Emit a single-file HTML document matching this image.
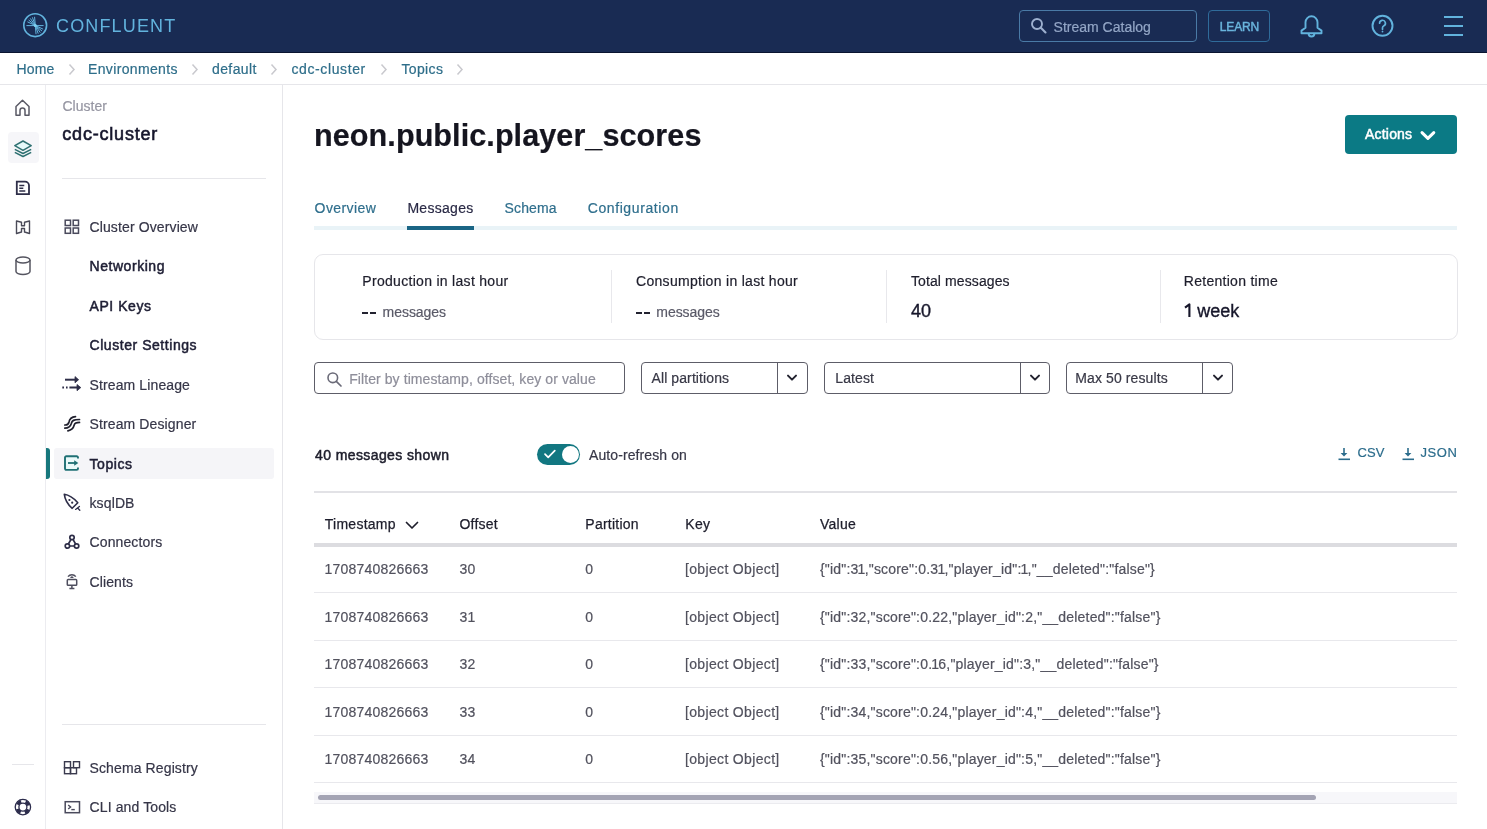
<!DOCTYPE html>
<html><head><meta charset="utf-8"><title>neon.public.player_scores | Confluent</title>
<style>
*{box-sizing:border-box;margin:0;padding:0}
html,body{width:1487px;height:829px;overflow:hidden;background:#fff;font-family:"Liberation Sans",sans-serif}
.t{position:absolute;white-space:nowrap;line-height:1;-webkit-text-stroke:0.2px currentColor}
.r{position:absolute}
</style></head><body>
<div id="page" style="position:absolute;left:0;top:0;width:1487px;height:829px;will-change:transform;background:#fff">
<div class="r" style="left:0px;top:0px;width:1487px;height:52px;background:#192b53"></div>
<div class="r" style="left:0px;top:52px;width:1487px;height:1px;background:#0a1430"></div>
<svg class="r" style="left:21px;top:12px" width="29" height="29" viewBox="0 0 29 29"><circle cx="14.2" cy="13.2" r="11.4" fill="none" stroke="#62b3dd" stroke-width="1.6"/>
<g stroke="#62b3dd" stroke-width="1" stroke-linecap="round" fill="none">
<path d="M5.8 13.6 H22.2"/>
<path d="M14.3 13.5 L13.6 5.2 M14.3 13.5 L11.5 5.7 M14.3 13.5 L9.5 6.7 M14.3 13.5 L7.9 8.2 M14.3 13.5 L6.8 10.0 M14.3 13.5 L15.0 21.8 M14.3 13.5 L17.1 21.3 M14.3 13.5 L19.1 20.3 M14.3 13.5 L20.7 18.8 M14.3 13.5 L21.8 17.0"/>
</g><circle cx="14.3" cy="13.5" r="1.6" fill="#7fd0f0"/></svg>
<div class="t" style="left:56px;top:17px;font-size:18px;color:#62b3dd;font-weight:normal;letter-spacing:1.15px;-webkit-text-stroke:0">CONFLUENT</div>
<div class="r" style="left:1019px;top:10px;width:178px;height:32px;border:1.5px solid #4a7aa6;border-radius:4px"></div>
<svg class="r" style="left:1030px;top:17px" width="18" height="18" viewBox="0 0 18 18"><circle cx="7" cy="7" r="5" fill="none" stroke="#9db0cf" stroke-width="1.9"/><path d="M10.6 10.6 L15.5 15.5" stroke="#9db0cf" stroke-width="2.1" stroke-linecap="round"/></svg>
<div class="t" style="left:1053.6px;top:19.9px;font-size:14px;color:#93a6c6;font-weight:normal;">Stream Catalog</div>
<div class="r" style="left:1208px;top:10px;width:62px;height:32px;border:1.5px solid #2f6b9a;border-radius:4px"></div>
<div class="t" style="left:1219.8px;top:20.6px;font-size:12px;color:#6ab5dd;font-weight:normal;letter-spacing:-0.15px;-webkit-text-stroke:0.45px #6ab5dd">LEARN</div>
<svg class="r" style="left:1299px;top:13px" width="25" height="27" viewBox="0 0 25 27"><path d="M6.5 14.8 V9.3 a6 6 0 0 1 12 0 V14.8 L22.5 17.6 V20.2 H2.5 V17.6 Z" fill="none" stroke="#62b3dd" stroke-width="1.9" stroke-linejoin="round"/><path d="M9.6 20.4 a2.9 3.1 0 0 0 5.8 0" fill="none" stroke="#62b3dd" stroke-width="1.9"/></svg>
<svg class="r" style="left:1370px;top:14px" width="25" height="25" viewBox="0 0 25 25"><circle cx="12.5" cy="11.8" r="10" fill="none" stroke="#62b3dd" stroke-width="1.9"/><path d="M9.6 9.2 a2.9 2.9 0 1 1 4.3 2.5 c-0.9 0.5 -1.4 1 -1.4 2 v1.6" fill="none" stroke="#62b3dd" stroke-width="1.7" stroke-linecap="round"/><circle cx="12.5" cy="17.6" r="0.9" fill="#62b3dd"/></svg>
<div class="r" style="left:1444px;top:16px;width:19px;height:1.6px;background:#62b3dd"></div>
<div class="r" style="left:1444px;top:25px;width:19px;height:1.6px;background:#62b3dd"></div>
<div class="r" style="left:1444px;top:34px;width:19px;height:1.6px;background:#62b3dd"></div>
<div class="r" style="left:0px;top:84px;width:1487px;height:1px;background:#e6e6ea"></div>
<div class="t" style="left:16.5px;top:61.599999999999994px;font-size:14px;color:#2e6e8a;font-weight:normal;letter-spacing:0.15px">Home</div>
<div class="t" style="left:88px;top:61.599999999999994px;font-size:14px;color:#2e6e8a;font-weight:normal;letter-spacing:0.35px">Environments</div>
<div class="t" style="left:212px;top:61.599999999999994px;font-size:14px;color:#2e6e8a;font-weight:normal;letter-spacing:0.4px">default</div>
<div class="t" style="left:291.5px;top:61.599999999999994px;font-size:14px;color:#2e6e8a;font-weight:normal;letter-spacing:0.6px">cdc-cluster</div>
<div class="t" style="left:401.5px;top:61.599999999999994px;font-size:14px;color:#2e6e8a;font-weight:normal;letter-spacing:0.35px">Topics</div>
<svg class="r" style="left:68px;top:63px" width="8" height="13" viewBox="0 0 8 13"><path d="M1.5 1.5 L6 6.5 L1.5 11.5" fill="none" stroke="#c9c9ce" stroke-width="1.5"/></svg>
<svg class="r" style="left:191px;top:63px" width="8" height="13" viewBox="0 0 8 13"><path d="M1.5 1.5 L6 6.5 L1.5 11.5" fill="none" stroke="#c9c9ce" stroke-width="1.5"/></svg>
<svg class="r" style="left:270px;top:63px" width="8" height="13" viewBox="0 0 8 13"><path d="M1.5 1.5 L6 6.5 L1.5 11.5" fill="none" stroke="#c9c9ce" stroke-width="1.5"/></svg>
<svg class="r" style="left:380px;top:63px" width="8" height="13" viewBox="0 0 8 13"><path d="M1.5 1.5 L6 6.5 L1.5 11.5" fill="none" stroke="#c9c9ce" stroke-width="1.5"/></svg>
<svg class="r" style="left:456px;top:63px" width="8" height="13" viewBox="0 0 8 13"><path d="M1.5 1.5 L6 6.5 L1.5 11.5" fill="none" stroke="#c9c9ce" stroke-width="1.5"/></svg>
<div class="r" style="left:45px;top:85px;width:1px;height:744px;background:#ececf0"></div>
<div class="r" style="left:282px;top:85px;width:1px;height:744px;background:#e6e6ea"></div>
<svg class="r" style="left:14px;top:99px" width="17" height="18" viewBox="0 0 17 18"><path d="M2 16.2 V7.5 L8.5 1.2 L15 7.5 V16.2 H11 V11.5 a2.5 2.5 0 0 0 -5 0 V16.2 Z" fill="none" stroke="#5a5a66" stroke-width="1.5" stroke-linejoin="round"/></svg>
<div class="r" style="left:8px;top:132px;width:31px;height:31px;background:#f6f6f9;border-radius:4px"></div>
<svg class="r" style="left:13px;top:139px" width="20" height="19" viewBox="0 0 20 19"><path d="M1.8 10.3 L10 14.5 L18.2 10.3" fill="none" stroke="#2f7172" stroke-width="1.5" stroke-linejoin="round"/><path d="M1.8 13.3 L10 17.5 L18.2 13.3" fill="none" stroke="#2f7172" stroke-width="1.5" stroke-linejoin="round"/><path d="M10 2 L18.2 6.7 L10 11.3 L1.8 6.7 Z" fill="#e6fafa" stroke="#2f7172" stroke-width="1.5" stroke-linejoin="round"/></svg>
<svg class="r" style="left:15px;top:180px" width="16" height="16" viewBox="0 0 16 16"><path d="M1.8 1.6 H10 a4 4 0 0 1 4 4 V14.2 H1.8 Z" fill="none" stroke="#2e2e48" stroke-width="1.8"/><path d="M4.3 5.5 H9.3 M4.3 8.2 H8.3 M4.3 11 H10.3" stroke="#2e2e48" stroke-width="1.5"/></svg>
<svg class="r" style="left:15px;top:219px" width="16" height="16" viewBox="0 0 16 16"><path d="M1.5 2 L6.5 3.3 V6.7 H9.5 V3.3 L14.5 2 V14.5 L9.5 13 V9.5 H6.5 V13 L1.5 14.5 Z" fill="none" stroke="#4a4a58" stroke-width="1.4" stroke-linejoin="round"/></svg>
<svg class="r" style="left:14px;top:255px" width="18" height="22" viewBox="0 0 18 22"><ellipse cx="9" cy="5" rx="7" ry="3" fill="none" stroke="#555560" stroke-width="1.5"/><path d="M2 5 V16.5 a7 3 0 0 0 14 0 V5" fill="none" stroke="#555560" stroke-width="1.5"/></svg>
<div class="r" style="left:12px;top:764px;width:22px;height:1px;background:#e6e6ea"></div>
<svg class="r" style="left:11px;top:795px" width="24" height="24" viewBox="0 0 24 24"><g fill="none" stroke="#2c2c4c"><circle cx="11.9" cy="12.1" r="7.7" stroke-width="1.3"/><circle cx="11.9" cy="12.1" r="4" stroke-width="1.3"/><circle cx="11.9" cy="12.1" r="5.85" stroke-width="3.4" stroke-dasharray="4.6 4.51" stroke-dashoffset="-2.25"/></g></svg>
<div class="t" style="left:62.5px;top:98.5px;font-size:14px;color:#9696a2;font-weight:normal;">Cluster</div>
<div class="t" style="left:62.3px;top:124.6px;font-size:18px;color:#16162c;font-weight:normal;letter-spacing:0.8px;-webkit-text-stroke:0.6px #16162c">cdc-cluster</div>
<div class="r" style="left:62px;top:178px;width:204px;height:1px;background:#e6e6ea"></div>
<div class="r" style="left:54px;top:448px;width:220px;height:31px;background:#f5f5f8;border-radius:3px"></div>
<div class="r" style="left:46px;top:448px;width:4px;height:31px;background:#17777c;border-radius:0 3px 3px 0"></div>
<div class="t" style="left:89.5px;top:220.1px;font-size:14px;color:#363648;font-weight:normal;letter-spacing:0.12px">Cluster Overview</div>
<div class="t" style="left:89.5px;top:259.2px;font-size:14px;color:#1e1e34;font-weight:normal;letter-spacing:0.55px;-webkit-text-stroke:0.5px #1e1e34">Networking</div>
<div class="t" style="left:89.5px;top:299px;font-size:14px;color:#1e1e34;font-weight:normal;letter-spacing:0.55px;-webkit-text-stroke:0.5px #1e1e34">API Keys</div>
<div class="t" style="left:89.5px;top:338.3px;font-size:14px;color:#1e1e34;font-weight:normal;letter-spacing:0.55px;-webkit-text-stroke:0.5px #1e1e34">Cluster Settings</div>
<div class="t" style="left:89.5px;top:377.7px;font-size:14px;color:#363648;font-weight:normal;letter-spacing:0.12px">Stream Lineage</div>
<div class="t" style="left:89.5px;top:417.1px;font-size:14px;color:#363648;font-weight:normal;letter-spacing:0.12px">Stream Designer</div>
<div class="t" style="left:89.5px;top:456.6px;font-size:14px;color:#1e1e34;font-weight:normal;letter-spacing:0.55px;-webkit-text-stroke:0.5px #1e1e34">Topics</div>
<div class="t" style="left:89.5px;top:496px;font-size:14px;color:#363648;font-weight:normal;letter-spacing:0.12px">ksqlDB</div>
<div class="t" style="left:89.5px;top:535.3px;font-size:14px;color:#363648;font-weight:normal;letter-spacing:0.12px">Connectors</div>
<div class="t" style="left:89.5px;top:574.9px;font-size:14px;color:#363648;font-weight:normal;letter-spacing:0.12px">Clients</div>
<div class="t" style="left:89.5px;top:760.9px;font-size:14px;color:#363648;font-weight:normal;letter-spacing:0.12px">Schema Registry</div>
<div class="t" style="left:89.5px;top:800px;font-size:14px;color:#363648;font-weight:normal;letter-spacing:0.12px">CLI and Tools</div>
<div class="r" style="left:62px;top:724px;width:204px;height:1px;background:#e6e6ea"></div>
<svg class="r" style="left:63px;top:218px" width="18" height="18" viewBox="0 0 18 18"><g fill="none" stroke="#4a4a5c" stroke-width="1.5"><rect x="2.2" y="2.2" width="5.3" height="5.3"/><rect x="10.2" y="2.2" width="5.3" height="5.3"/><rect x="2.2" y="10" width="5.3" height="5.3"/><rect x="10.2" y="10" width="5.3" height="5.3"/></g></svg>
<svg class="r" style="left:61px;top:374px" width="22" height="18" viewBox="0 0 22 18"><g stroke="#2e2e48" stroke-width="2" fill="#2e2e48"><path d="M4 5.7 H14" /><path d="M14 2.6 L17.6 5.7 L14 8.8 Z" stroke-width="0.8" stroke-linejoin="round"/><path d="M1.3 13.6 H3 M5 13.6 H6.6 M8.4 13.6 H16" /><path d="M16 10.5 L19.8 13.6 L16 16.7 Z" stroke-width="0.8" stroke-linejoin="round"/></g></svg>
<svg class="r" style="left:61px;top:412px" width="24" height="24" viewBox="0 0 24 24"><g fill="none" stroke="#20202e" stroke-width="1.7" stroke-linecap="round"><path d="M3.8 13 C6.5 13.2 7.5 12.5 8 10 C8.5 7 10 5 14.5 4.6"/><path d="M3.8 16.2 C7.5 16 9.5 14.5 10.3 11.5 C11 8.5 12.5 7.5 18.5 7.5"/><path d="M6.9 18.8 C11 18 12.5 16 13.2 13 C13.8 10.8 15 10.4 18.5 10.4"/></g></svg>
<svg class="r" style="left:63px;top:455px" width="18" height="17" viewBox="0 0 18 17"><path d="M15 3.6 V2.6 a1.3 1.3 0 0 0 -1.3 -1.3 H3.3 a1.3 1.3 0 0 0 -1.3 1.3 V13.6 a1.3 1.3 0 0 0 1.3 1.3 H13.7 a1.3 1.3 0 0 0 1.3 -1.3 V12.6" fill="#eafafa" stroke="#1f7074" stroke-width="1.9"/><path d="M5 8 H12.5" stroke="#1f7074" stroke-width="1.8"/><path d="M11.2 5.2 L15.3 8 L11.2 10.8 Z" fill="#1f7074"/></svg>
<svg class="r" style="left:60px;top:490px" width="24" height="24" viewBox="0 0 24 24"><path d="M4.3 4.3 C9.5 5 14 8.5 17.8 12.7 L12.2 18.3 C8.2 14.8 5 10 4.3 4.3 Z" fill="none" stroke="#2e2e48" stroke-width="1.6" stroke-linejoin="round"/><circle cx="9.4" cy="10" r="1.1" fill="#2e2e48"/><circle cx="12.2" cy="12.7" r="1.1" fill="#2e2e48"/><path d="M15.6 19.4 L19.4 16.4 M17.6 18 L19.8 20.3" stroke="#2e2e48" stroke-width="1.3" stroke-linecap="round"/></svg>
<svg class="r" style="left:63px;top:533px" width="18" height="18" viewBox="0 0 18 18"><g fill="none" stroke="#2e2e48" stroke-width="1.7"><circle cx="9" cy="4.5" r="2.2"/><circle cx="4.4" cy="13" r="2.2"/><circle cx="13.6" cy="13" r="2.2"/><path d="M8 6.4 L5.4 11 M10 6.4 L12.6 11 M6.6 13 H11.4"/></g></svg>
<svg class="r" style="left:60px;top:569px" width="24" height="24" viewBox="0 0 24 24"><g fill="none" stroke="#4e4e5e" stroke-width="1.5"><path d="M8 7.6 A4.9 4.9 0 0 1 15.8 7.6"/><rect x="7.3" y="10.6" width="9.4" height="5.7" rx="0.8"/><path d="M11.9 16.3 V19 M9.4 19.4 H14.4"/></g><path d="M10.2 8.9 A1.7 1.7 0 0 1 13.6 8.9 Z" fill="#4e4e5e"/></svg>
<svg class="r" style="left:60px;top:756px" width="24" height="24" viewBox="0 0 24 24"><g fill="none" stroke="#3a3a4e" stroke-width="1.4"><rect x="4.5" y="5.7" width="6" height="6"/><rect x="13.5" y="5.7" width="6" height="6"/><rect x="4.5" y="11.7" width="6" height="6"/><rect x="10.5" y="11.7" width="6" height="6"/></g></svg>
<svg class="r" style="left:63px;top:800px" width="18" height="15" viewBox="0 0 18 15"><rect x="2.2" y="1.7" width="14.3" height="11" fill="none" stroke="#4a4a5c" stroke-width="1.5"/><path d="M5.2 5 L7.6 7 L5.2 9" fill="none" stroke="#4a4a5c" stroke-width="1.4"/><path d="M8.3 9.6 H11.8" stroke="#4a4a5c" stroke-width="1.4"/></svg>
<div class="t" style="left:314px;top:119.6px;font-size:30.6px;color:#15151f;font-weight:bold;letter-spacing:0.06px">neon.public.player_scores</div>
<div class="r" style="left:1345px;top:114.5px;width:112px;height:39.5px;background:#0b7a85;border-radius:4px"></div>
<div class="t" style="left:1365px;top:127px;font-size:14px;color:#ffffff;font-weight:normal;letter-spacing:0.2px;-webkit-text-stroke:0.5px #ffffff">Actions</div>
<svg class="r" style="left:1419px;top:129px" width="18" height="14" viewBox="0 0 18 14"><path d="M3 3.6 L8.9 9.4 L14.8 3.6" fill="none" stroke="#fff" stroke-width="3" stroke-linecap="round" stroke-linejoin="round"/></svg>
<div class="r" style="left:314px;top:226px;width:1143px;height:3.5px;background:#e9f3f7"></div>
<div class="r" style="left:407px;top:226px;width:67px;height:3.5px;background:#1a6585"></div>
<div class="t" style="left:314.6px;top:201.1px;font-size:14px;color:#2f6f8d;font-weight:normal;letter-spacing:0.4px">Overview</div>
<div class="t" style="left:407.4px;top:201.1px;font-size:14px;color:#2a2a46;font-weight:normal;letter-spacing:0.3px">Messages</div>
<div class="t" style="left:504.5px;top:201.1px;font-size:14px;color:#2f6f8d;font-weight:normal;letter-spacing:0.15px">Schema</div>
<div class="t" style="left:587.7px;top:201.1px;font-size:14px;color:#2f6f8d;font-weight:normal;letter-spacing:0.6px">Configuration</div>
<div class="r" style="left:314px;top:254px;width:1144px;height:86px;border:1.5px solid #e6e6ea;border-radius:9px"></div>
<div class="r" style="left:611px;top:270px;width:1px;height:53px;background:#e8e8ec"></div>
<div class="r" style="left:885.5px;top:270px;width:1px;height:53px;background:#e8e8ec"></div>
<div class="r" style="left:1160px;top:270px;width:1px;height:53px;background:#e8e8ec"></div>
<div class="t" style="left:362.3px;top:273.8px;font-size:14px;color:#1e1e2c;font-weight:normal;letter-spacing:0.3px">Production in last hour</div>
<div class="t" style="left:636px;top:273.8px;font-size:14px;color:#1e1e2c;font-weight:normal;letter-spacing:0.3px">Consumption in last hour</div>
<div class="t" style="left:911px;top:273.8px;font-size:14px;color:#1e1e2c;font-weight:normal;letter-spacing:0.1px">Total messages</div>
<div class="t" style="left:1183.8px;top:273.8px;font-size:14px;color:#1e1e2c;font-weight:normal;letter-spacing:0.28px">Retention time</div>
<div class="r" style="left:362.3px;top:311.5px;width:5.5px;height:2.2px;background:#222230"></div>
<div class="r" style="left:370.3px;top:311.5px;width:5.5px;height:2.2px;background:#222230"></div>
<div class="t" style="left:382.6px;top:305.3px;font-size:14px;color:#5a5a68;font-weight:normal;letter-spacing:-0.05px">messages</div>
<div class="r" style="left:636px;top:311.5px;width:5.5px;height:2.2px;background:#222230"></div>
<div class="r" style="left:644px;top:311.5px;width:5.5px;height:2.2px;background:#222230"></div>
<div class="t" style="left:656.3px;top:305.3px;font-size:14px;color:#5a5a68;font-weight:normal;letter-spacing:-0.05px">messages</div>
<div class="t" style="left:911px;top:301.6px;font-size:18px;color:#16162a;font-weight:normal;-webkit-text-stroke:0.35px #16162a">40</div>
<svg class="r" style="left:1180px;top:298px" width="16" height="24" viewBox="0 0 16 24"><path d="M5 9.6 L9.4 6.4 V18.9" fill="none" stroke="#16162a" stroke-width="2.1" stroke-linejoin="round"/></svg>
<div class="t" style="left:1197.2px;top:301.6px;font-size:18px;color:#16162a;font-weight:normal;-webkit-text-stroke:0.35px #16162a;letter-spacing:0px">week</div>
<div class="r" style="left:314px;top:362px;width:311px;height:32px;border:1.5px solid #5d5d68;border-radius:4px"></div>
<svg class="r" style="left:326px;top:371px" width="17" height="17" viewBox="0 0 17 17"><circle cx="6.8" cy="6.8" r="4.8" fill="none" stroke="#6a6a78" stroke-width="1.6"/><path d="M10.3 10.3 L15 15" stroke="#6a6a78" stroke-width="1.7" stroke-linecap="round"/></svg>
<div class="t" style="left:349.2px;top:371.5px;font-size:14px;color:#8e8e9a;font-weight:normal;letter-spacing:0.08px">Filter by timestamp, offset, key or value</div>
<div class="r" style="left:640.5px;top:362.3px;width:167.0px;height:31.7px;border:1.5px solid #5d5d68;border-radius:4px"></div>
<div class="r" style="left:777px;top:363px;width:1.2px;height:30.5px;background:#5d5d68"></div>
<div class="t" style="left:651.5px;top:371.2px;font-size:14px;color:#383846;font-weight:normal;letter-spacing:0.1px">All partitions</div>
<svg class="r" style="left:786.25px;top:372px" width="12" height="12" viewBox="0 0 12 12"><path d="M2 3.6 L6 7.6 L10 3.6" fill="none" stroke="#22222e" stroke-width="2" stroke-linecap="round" stroke-linejoin="round"/></svg>
<div class="r" style="left:824.3px;top:362.3px;width:225.70000000000005px;height:31.7px;border:1.5px solid #5d5d68;border-radius:4px"></div>
<div class="r" style="left:1019.6px;top:363px;width:1.2px;height:30.5px;background:#5d5d68"></div>
<div class="t" style="left:835.3px;top:371.2px;font-size:14px;color:#383846;font-weight:normal;letter-spacing:0.1px">Latest</div>
<svg class="r" style="left:1028.8px;top:372px" width="12" height="12" viewBox="0 0 12 12"><path d="M2 3.6 L6 7.6 L10 3.6" fill="none" stroke="#22222e" stroke-width="2" stroke-linecap="round" stroke-linejoin="round"/></svg>
<div class="r" style="left:1066.3px;top:362.3px;width:167.20000000000005px;height:31.7px;border:1.5px solid #5d5d68;border-radius:4px"></div>
<div class="r" style="left:1202.3px;top:363px;width:1.2px;height:30.5px;background:#5d5d68"></div>
<div class="t" style="left:1075.3px;top:371.2px;font-size:14px;color:#383846;font-weight:normal;letter-spacing:0.1px">Max 50 results</div>
<svg class="r" style="left:1211.9px;top:372px" width="12" height="12" viewBox="0 0 12 12"><path d="M2 3.6 L6 7.6 L10 3.6" fill="none" stroke="#22222e" stroke-width="2" stroke-linecap="round" stroke-linejoin="round"/></svg>
<div class="t" style="left:315px;top:447.5px;font-size:14px;color:#1e1e2c;font-weight:normal;letter-spacing:0.4px;-webkit-text-stroke:0.5px #1e1e2c">40 messages shown</div>
<div class="r" style="left:537px;top:444px;width:43px;height:21px;background:#127781;border-radius:11px"></div>
<div class="r" style="left:561.5px;top:446px;width:17px;height:17px;border-radius:50%;background:#fff"></div>
<svg class="r" style="left:543px;top:448px" width="14" height="12" viewBox="0 0 14 12"><path d="M2 6.2 L5.2 9.4 L11.8 2.6" fill="none" stroke="#fff" stroke-width="1.7" stroke-linecap="round" stroke-linejoin="round"/></svg>
<div class="t" style="left:589px;top:447.5px;font-size:14px;color:#383848;font-weight:normal;letter-spacing:0.1px">Auto-refresh on</div>
<svg class="r" style="left:1338px;top:447px" width="13" height="14" viewBox="0 0 13 14"><path d="M6 1 V8" stroke="#2b6c8c" stroke-width="1.6"/><path d="M2.6 6 L6 9.6 L9.4 6 Z" fill="#2b6c8c"/><path d="M0.5 12.3 H12" stroke="#2b6c8c" stroke-width="1.6"/></svg>
<svg class="r" style="left:1402px;top:447px" width="13" height="14" viewBox="0 0 13 14"><path d="M6 1 V8" stroke="#2b6c8c" stroke-width="1.6"/><path d="M2.6 6 L6 9.6 L9.4 6 Z" fill="#2b6c8c"/><path d="M0.5 12.3 H12" stroke="#2b6c8c" stroke-width="1.6"/></svg>
<div class="t" style="left:1357.5px;top:446.3px;font-size:13px;color:#2b6c8c;font-weight:normal;letter-spacing:0.1px">CSV</div>
<div class="t" style="left:1420.5px;top:446.3px;font-size:13px;color:#2b6c8c;font-weight:normal;letter-spacing:0.6px">JSON</div>
<div class="r" style="left:314px;top:491px;width:1143px;height:2px;background:#e2e2e6"></div>
<div class="t" style="left:324.8px;top:517.1px;font-size:14px;color:#1e1e2c;font-weight:normal;letter-spacing:0.25px;-webkit-text-stroke:0.25px #1e1e2c">Timestamp</div>
<div class="t" style="left:459.4px;top:517.1px;font-size:14px;color:#1e1e2c;font-weight:normal;letter-spacing:0.25px;-webkit-text-stroke:0.25px #1e1e2c">Offset</div>
<div class="t" style="left:585.3px;top:517.1px;font-size:14px;color:#1e1e2c;font-weight:normal;letter-spacing:0.25px;-webkit-text-stroke:0.25px #1e1e2c">Partition</div>
<div class="t" style="left:685.3px;top:517.1px;font-size:14px;color:#1e1e2c;font-weight:normal;letter-spacing:0.25px;-webkit-text-stroke:0.25px #1e1e2c">Key</div>
<div class="t" style="left:820px;top:517.1px;font-size:14px;color:#1e1e2c;font-weight:normal;letter-spacing:0.25px;-webkit-text-stroke:0.25px #1e1e2c">Value</div>
<svg class="r" style="left:404px;top:519px" width="16" height="12" viewBox="0 0 16 12"><path d="M2.5 3.5 L8 9 L13.5 3.5" fill="none" stroke="#1e1e2c" stroke-width="1.7" stroke-linecap="round" stroke-linejoin="round"/></svg>
<div class="r" style="left:314px;top:543px;width:1143px;height:3.5px;background:#dcdce0"></div>
<div class="t" style="left:324.5px;top:562px;font-size:14px;color:#52525e;font-weight:normal;letter-spacing:0.22px">1708740826663</div>
<div class="t" style="left:459.4px;top:562px;font-size:14px;color:#52525e;font-weight:normal;letter-spacing:0.2px">30</div>
<div class="t" style="left:585.3px;top:562px;font-size:14px;color:#52525e;font-weight:normal;">0</div>
<div class="t" style="left:685px;top:562px;font-size:14px;color:#52525e;font-weight:normal;letter-spacing:0.34px">[object Object]</div>
<div class="t" style="left:820px;top:562px;font-size:14px;color:#52525e;font-weight:normal;letter-spacing:0.19px">{"id":3<span style="margin:0 -0.95px">1</span>,"score":0.3<span style="margin:0 -0.95px">1</span>,"player_id":<span style="margin:0 -0.95px">1</span>,"__deleted":"false"}</div>
<div class="r" style="left:314px;top:592px;width:1143px;height:1px;background:#e8e8ec"></div>
<div class="t" style="left:324.5px;top:609.5px;font-size:14px;color:#52525e;font-weight:normal;letter-spacing:0.22px">1708740826663</div>
<div class="t" style="left:459.4px;top:609.5px;font-size:14px;color:#52525e;font-weight:normal;letter-spacing:0.2px">31</div>
<div class="t" style="left:585.3px;top:609.5px;font-size:14px;color:#52525e;font-weight:normal;">0</div>
<div class="t" style="left:685px;top:609.5px;font-size:14px;color:#52525e;font-weight:normal;letter-spacing:0.34px">[object Object]</div>
<div class="t" style="left:820px;top:609.5px;font-size:14px;color:#52525e;font-weight:normal;letter-spacing:0.19px">{"id":32,"score":0.22,"player_id":2,"__deleted":"false"}</div>
<div class="r" style="left:314px;top:640px;width:1143px;height:1px;background:#e8e8ec"></div>
<div class="t" style="left:324.5px;top:657px;font-size:14px;color:#52525e;font-weight:normal;letter-spacing:0.22px">1708740826663</div>
<div class="t" style="left:459.4px;top:657px;font-size:14px;color:#52525e;font-weight:normal;letter-spacing:0.2px">32</div>
<div class="t" style="left:585.3px;top:657px;font-size:14px;color:#52525e;font-weight:normal;">0</div>
<div class="t" style="left:685px;top:657px;font-size:14px;color:#52525e;font-weight:normal;letter-spacing:0.34px">[object Object]</div>
<div class="t" style="left:820px;top:657px;font-size:14px;color:#52525e;font-weight:normal;letter-spacing:0.19px">{"id":33,"score":0.<span style="margin:0 -0.95px">1</span>6,"player_id":3,"__deleted":"false"}</div>
<div class="r" style="left:314px;top:687px;width:1143px;height:1px;background:#e8e8ec"></div>
<div class="t" style="left:324.5px;top:704.5px;font-size:14px;color:#52525e;font-weight:normal;letter-spacing:0.22px">1708740826663</div>
<div class="t" style="left:459.4px;top:704.5px;font-size:14px;color:#52525e;font-weight:normal;letter-spacing:0.2px">33</div>
<div class="t" style="left:585.3px;top:704.5px;font-size:14px;color:#52525e;font-weight:normal;">0</div>
<div class="t" style="left:685px;top:704.5px;font-size:14px;color:#52525e;font-weight:normal;letter-spacing:0.34px">[object Object]</div>
<div class="t" style="left:820px;top:704.5px;font-size:14px;color:#52525e;font-weight:normal;letter-spacing:0.19px">{"id":34,"score":0.24,"player_id":4,"__deleted":"false"}</div>
<div class="r" style="left:314px;top:735px;width:1143px;height:1px;background:#e8e8ec"></div>
<div class="t" style="left:324.5px;top:751.8px;font-size:14px;color:#52525e;font-weight:normal;letter-spacing:0.22px">1708740826663</div>
<div class="t" style="left:459.4px;top:751.8px;font-size:14px;color:#52525e;font-weight:normal;letter-spacing:0.2px">34</div>
<div class="t" style="left:585.3px;top:751.8px;font-size:14px;color:#52525e;font-weight:normal;">0</div>
<div class="t" style="left:685px;top:751.8px;font-size:14px;color:#52525e;font-weight:normal;letter-spacing:0.34px">[object Object]</div>
<div class="t" style="left:820px;top:751.8px;font-size:14px;color:#52525e;font-weight:normal;letter-spacing:0.19px">{"id":35,"score":0.56,"player_id":5,"__deleted":"false"}</div>
<div class="r" style="left:314px;top:782px;width:1143px;height:1px;background:#e8e8ec"></div>
<div class="r" style="left:314px;top:792px;width:1143px;height:11px;background:#f7f7fa"></div>
<div class="r" style="left:314px;top:802.5px;width:1143px;height:1.2px;background:#ebebef"></div>
<div class="r" style="left:317.5px;top:795px;width:998px;height:5px;background:#a4a4b4;border-radius:3px"></div>
</div>
</body></html>
